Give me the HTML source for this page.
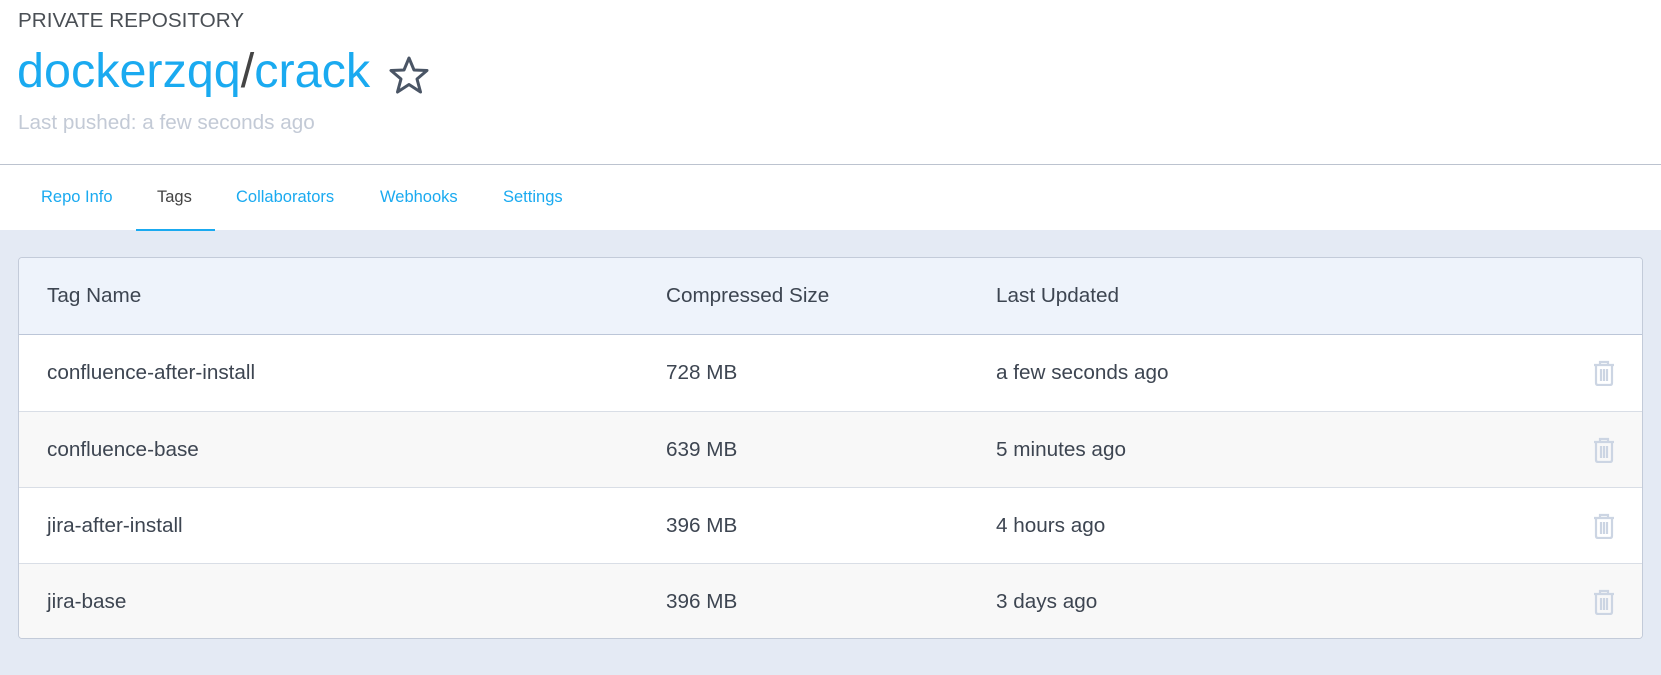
<!DOCTYPE html>
<html><head><meta charset="utf-8"><style>
*{margin:0;padding:0;box-sizing:border-box}
body{width:1661px;height:675px;overflow:hidden;background:#e4eaf4;font-family:"Liberation Sans",sans-serif;position:relative}
.top{position:absolute;left:0;top:0;width:1661px;height:230px;background:#fff}
.pr{position:absolute;left:18px;top:9px;font-size:20.7px;color:#4a4f55}
.title{position:absolute;left:17px;top:43px;font-size:48.5px;color:#1aaaf0;white-space:nowrap}
.title .s{color:#444}
.star{position:absolute;left:388px;top:55px}
.lp{position:absolute;left:18px;top:111px;font-size:20.7px;color:#c3cad6}
.hr{position:absolute;left:0;top:164px;width:1661px;height:1px;background:#bcc3cf}
.tab{position:absolute;top:188px;font-size:16.5px;color:#1aaaf0}
.ul{position:absolute;left:136px;top:229px;width:79px;height:2px;background:#1aaaf0}
.card{position:absolute;left:18px;top:257px;width:1625px;height:382px;border:1px solid #c3cbd9;border-radius:4px;overflow:hidden;background:#fff}
.row{position:absolute;left:0;width:100%;border-top:1px solid #d9dee6;font-size:20.7px;color:#3d4551}
.row span{position:absolute;top:50%;transform:translateY(-50%)}
.c1{left:28px}.c2{left:647px}.c3{left:977px}
.tr{position:absolute;left:1574px;top:50%;transform:translateY(-50%)}
</style></head><body>
<div class="top">
<div class="pr">PRIVATE REPOSITORY</div>
<div class="title">dockerzqq<span class="s">/</span>crack</div>
<svg class="star" width="42" height="40" viewBox="0 0 42 40"><path d="M21 3 L26 15 L39 15.5 L29 24 L32.5 37 L21 29.5 L9.5 37 L13 24 L3 15.5 L16 15 Z" fill="none" stroke="#4a5565" stroke-width="3" stroke-linejoin="round"/></svg>
<div class="lp">Last pushed: a few seconds ago</div>
<div class="hr"></div>
<div class="tab" style="left:41px">Repo Info</div>
<div class="tab" style="left:157px;color:#444">Tags</div>
<div class="tab" style="left:236px">Collaborators</div>
<div class="tab" style="left:380px">Webhooks</div>
<div class="tab" style="left:503px">Settings</div>
<div class="ul"></div>
</div>
<div class="card">
<div class="row" style="top:0;height:77px;background:#eef3fb;border-top:none;border-bottom:1px solid #bcc6d8"><span class="c1">Tag Name</span><span class="c2">Compressed Size</span><span class="c3">Last Updated</span></div>
<div class="row" style="top:77px;height:76px;border-top:none"><span class="c1">confluence-after-install</span><span class="c2">728 MB</span><span class="c3">a few seconds ago</span>
<svg class="tr" width="22" height="26" viewBox="0 0 22 26"><g fill="none" stroke="#ccd5e3" stroke-width="2.2"><path d="M1 5H21M7 5V2H15V5M3 5V23Q3 25 5 25H17Q19 25 19 23V5"/><path d="M8 9V21M11 9V21M14 9V21"/></g></svg></div>
<div class="row" style="top:153px;height:76px;background:#f8f8f8"><span class="c1">confluence-base</span><span class="c2">639 MB</span><span class="c3">5 minutes ago</span>
<svg class="tr" width="22" height="26" viewBox="0 0 22 26"><g fill="none" stroke="#ccd5e3" stroke-width="2.2"><path d="M1 5H21M7 5V2H15V5M3 5V23Q3 25 5 25H17Q19 25 19 23V5"/><path d="M8 9V21M11 9V21M14 9V21"/></g></svg></div>
<div class="row" style="top:229px;height:76px"><span class="c1">jira-after-install</span><span class="c2">396 MB</span><span class="c3">4 hours ago</span>
<svg class="tr" width="22" height="26" viewBox="0 0 22 26"><g fill="none" stroke="#ccd5e3" stroke-width="2.2"><path d="M1 5H21M7 5V2H15V5M3 5V23Q3 25 5 25H17Q19 25 19 23V5"/><path d="M8 9V21M11 9V21M14 9V21"/></g></svg></div>
<div class="row" style="top:305px;height:77px;background:#f8f8f8"><span class="c1">jira-base</span><span class="c2">396 MB</span><span class="c3">3 days ago</span>
<svg class="tr" width="22" height="26" viewBox="0 0 22 26"><g fill="none" stroke="#ccd5e3" stroke-width="2.2"><path d="M1 5H21M7 5V2H15V5M3 5V23Q3 25 5 25H17Q19 25 19 23V5"/><path d="M8 9V21M11 9V21M14 9V21"/></g></svg></div>
</div>
</body></html>
